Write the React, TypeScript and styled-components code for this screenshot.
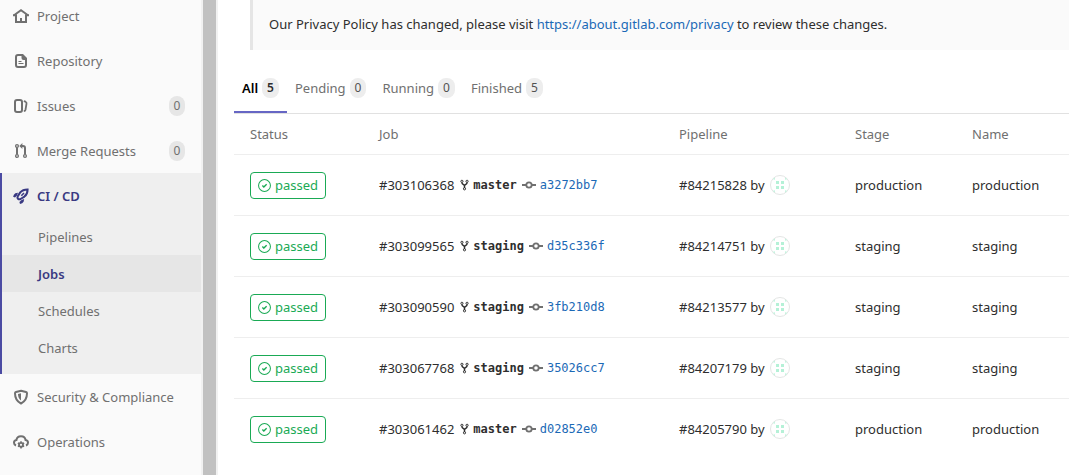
import React from "react";
import styled, { createGlobalStyle, css } from "styled-components";

const GlobalStyle = createGlobalStyle`
  *, *::before, *::after { box-sizing: border-box; }
  body {
    margin: 0;
    background: #fff;
    color: #2e2e2e;
    font: 13px/20px "Noto Sans", "Open Sans", sans-serif;
  }
  a { color: inherit; text-decoration: none; }
  ul { list-style: none; margin: 0; padding: 0; }
  svg { display: block; flex: none; }
`;

const Page = styled.div`
  display: flex;
  min-height: 100vh;
  overflow: hidden;
`;

const Sidebar = styled.nav`
  flex: none;
  width: 201px;
  margin-top: -7px;
  background: #fafafa;
  color: #707070;
`;

const Scrollbar = styled.div`
  flex: none;
  width: 17px;
  padding: 0 2px;
  background: #f1f1f1;
`;

const Thumb = styled.div`
  height: 100%;
  background: #c1c1c1;
`;

const NavItem = styled.li<{ $active?: boolean }>`
  ${(p) =>
    p.$active &&
    css`
      padding-bottom: 8px;
      background: #efefef;
      box-shadow: inset 2px 0 0 #4b4ba3;
    `}
`;

const NavLink = styled.a<{ $active?: boolean }>`
  display: flex;
  align-items: center;
  gap: 8px;
  height: 45px;
  padding: 0 16px 0 13px;
  ${(p) => p.$active && "color: #393982; font-weight: 600;"}
`;

const NavText = styled.span`
  flex: 1;
  white-space: nowrap;
`;

const SubItem = styled.li<{ $active?: boolean }>`
  margin-left: 2px;
  ${(p) => p.$active && "background: #e6e6e6; color: #393982; font-weight: 600;"}
`;

const SubLink = styled.a`
  display: flex;
  align-items: center;
  height: 37px;
  padding-left: 36px;
`;

const Count = styled.span<{ $dark?: boolean }>`
  min-width: 16px;
  padding: 0 ${(p) => (p.$dark ? 4 : 5)}px;
  border-radius: 8px;
  background: ${(p) => (p.$dark ? "#e6e6e6" : "#ededed")};
  color: ${(p) => (p.$dark ? "#707070" : "#525252")};
  font-size: 12px;
  text-align: center;
`;

const Main = styled.main`
  flex: 1;
  min-width: 0;
  padding-left: 16px;
`;

const Notice = styled.p`
  margin: 0 0 0 16px;
  padding: 14px 16px 16px;
  border-left: 3px solid #e5e5e5;
  background: #fafafa;
`;

const Link = styled.a`
  color: #1b69b6;
`;

const Tabs = styled.ul`
  display: flex;
  border-bottom: 1px solid #e1e1e1;
`;

const Tab = styled.a<{ $active?: boolean }>`
  display: flex;
  align-items: flex-start;
  gap: 4px;
  height: 63px;
  padding: 28px 8px 0;
  color: #707070;
  ${(p) =>
    p.$active &&
    css`
      color: #000;
      font-weight: 600;
      border-bottom: 2px solid #6666c4;
      ${Count} { color: #2e2e2e; }
    `}
`;

const Table = styled.table`
  width: 100%;
  table-layout: fixed;
  border-collapse: separate;
  border-spacing: 0;
`;

const Th = styled.th<{ $width?: number }>`
  width: ${(p) => (p.$width ? `${p.$width}px` : "auto")};
  height: 41px;
  padding: 0 16px;
  border-bottom: 1px solid #eee;
  color: #707070;
  font-weight: 400;
  text-align: left;
`;

const Td = styled.td`
  height: 61px;
  padding: 0 16px;
  border-bottom: 1px solid #eee;
  white-space: nowrap;

  tr:last-child > & { border-bottom-color: transparent; }
`;

const Inline = styled.div`
  display: flex;
  align-items: center;
`;

const Status = styled.a`
  display: inline-flex;
  align-items: center;
  gap: 4px;
  height: 27px;
  padding: 0 7px;
  border: 1px solid #1aaa55;
  border-radius: 4px;
  color: #1aaa55;
  vertical-align: middle;
`;

const Ref = styled.a<{ $sha?: boolean }>`
  font: ${(p) => (p.$sha ? 400 : 700)} 12px/20px "DejaVu Sans Mono", monospace;
  color: ${(p) => (p.$sha ? "#1b69b6" : "#2e2e2e")};
`;

const RefIcon = styled.span<{ $commit?: boolean }>`
  padding: ${(p) => (p.$commit ? "0 4px 0 5px" : "0 3px 0 5px")};
  color: ${(p) => (p.$commit ? "#707070" : "#2e2e2e")};
`;

const Avatar = styled.a`
  margin-left: 5px;
`;

const HomeIcon = () => (
  <svg width="16" height="16" viewBox="0 0 16 16" fill="none" stroke="currentColor" strokeWidth="2">
    <path d="M1 7.200 8 2.300l7 4.900" />
    <path d="M0 7.200h4M12 7.200h4M3 7v7h10V7" />
    <path d="M8 10v4" />
  </svg>
);

const DocIcon = () => (
  <svg width="16" height="16" viewBox="0 0 16 16" fill="none" stroke="currentColor">
    <path d="M9.5 2H5a2 2 0 0 0-2 2v8a2 2 0 0 0 2 2h6a2 2 0 0 0 2-2V6" strokeWidth="2" />
    <path d="M8.5 1H10l4 4v2h-3.5a2 2 0 0 1-2-2z" fill="currentColor" stroke="none" />
    <path d="M5.5 8.5h3M5.5 10.5h5" />
  </svg>
);

const IssuesIcon = () => (
  <svg width="16" height="16" viewBox="0 0 16 16" fill="none" stroke="currentColor" strokeWidth="2">
    <rect x="2" y="2" width="7" height="12" rx="2" />
    <path d="M10.8 3.2l1.7.5q1.3.6 1 2l-1 6q-.3 1.3-1.7 1.5" strokeWidth="1.8" />
  </svg>
);

const MergeIcon = () => (
  <svg width="16" height="16" viewBox="0 0 16 16" fill="none" stroke="currentColor">
    <circle cx="4" cy="3" r="1.4" strokeWidth="1.3" />
    <circle cx="4" cy="13" r="1.4" strokeWidth="1.3" />
    <circle cx="12" cy="13" r="1.4" strokeWidth="1.3" />
    <path d="M4 4.5v7M12 11.5V5a2 2 0 0 0-2-2H8.5" strokeWidth="2" />
    <path d="M9.4 0v6L6.3 3z" fill="currentColor" stroke="none" />
  </svg>
);

const RocketIcon = () => (
  <svg width="16" height="16" viewBox="0 0 16 16" fill="none" stroke="currentColor">
    <path d="M14.600 1.400c-3.200 0-5.600.8-7.400 3L4.800 8.200q-.8 1.600.2 2.600t2.600.2l3.800-2.400c2.200-1.800 3.200-4 3.200-7.200z" strokeWidth="2" />
    <path d="M11 5 8.300 7.700" strokeWidth="1.500" />
    <path d="M5 4.800 2.300 5.200Q.6 6.200.1 8.800L2 9.400 4 7.500zM11.200 11l-.6 2.700q-1 1.700-3.600 2.200L6.400 14l2.200-2z" fill="currentColor" stroke="none" />
  </svg>
);

const ShieldIcon = () => (
  <svg width="16" height="16" viewBox="0 0 16 16" fill="none" stroke="currentColor">
    <path d="M8 1.700 13 3q1 .3 1 1.200c0 4.800-1.500 8-6 10.300C3.500 12.200 2 9 2 4.200Q2 3.300 3 3z" strokeWidth="2" />
    <path d="M8 4.200v7.400C5.900 10 5 8 5 5z" fill="currentColor" stroke="none" />
  </svg>
);

const CloudGearIcon = () => (
  <svg width="16" height="16" viewBox="0 0 16 16" fill="none" stroke="currentColor">
    <path d="M3 11.500C1.700 11 1 10 1 8.800 1 7.300 2 6.300 3.400 6.100 3.700 3.800 5.500 2.200 8 2.200s4.300 1.600 4.600 3.900c1.400.2 2.400 1.200 2.400 2.700 0 1.200-.7 2.200-2 2.700" strokeWidth="2" />
    <circle cx="8" cy="10.800" r="2" strokeWidth="1.800" />
    <path d="M8 7.200v1.600M8 12.800v1.600M4.900 9l1.400.8M9.700 11.800l1.400.8M4.900 12.600l1.400-.8M9.700 9.800l1.400-.8" strokeWidth="1.600" />
  </svg>
);

const PassedIcon = () => (
  <svg width="13" height="13" viewBox="0 0 14 14" fill="none" stroke="currentColor">
    <circle cx="7" cy="7" r="6.400" strokeWidth="1.100" />
    <path d="M4.700 7.100 6.300 8.700 9.300 5.700" strokeWidth="1.500" />
  </svg>
);

const ForkIcon = () => (
  <svg width="11" height="12" viewBox="0 0 15 16" fill="none" stroke="currentColor">
    <circle cx="4" cy="3" r="1.500" strokeWidth="1.300" />
    <circle cx="11" cy="3" r="1.500" strokeWidth="1.300" />
    <circle cx="7.500" cy="13.200" r="1.500" strokeWidth="1.300" />
    <path d="M4 4.500C4 7.500 7.500 6.500 7.500 9.500v2.500M11 4.500C11 7.500 7.500 6.500 7.500 9.500" strokeWidth="2" />
  </svg>
);

const CommitIcon = () => (
  <svg width="14" height="14" viewBox="0 0 14 14" fill="none" stroke="currentColor" strokeWidth="2">
    <circle cx="7" cy="7" r="2.700" strokeWidth="1.800" />
    <path d="M0 7h4M10 7h4" />
  </svg>
);

const Identicon = () => (
  <svg width="20" height="20" viewBox="0 0 20 20">
    <circle cx="10" cy="10" r="9.500" fill="#fff" stroke="#e3e5e4" />
    <g fill="#b5f1d7">
      <path d="M6 6h3v3H6zM11 6h3v3h-3zM6 11h3v3H6zM11 11h3v3h-3z" />
      <path d="M3 4 5 2.500 4.500 5zM17 4l-2-1.500.5 2.500zM3 16l2 1.500-.5-2.500zM17 16l-2 1.500.5-2.500z" />
    </g>
  </svg>
);

const navigation = [
  { label: "Project", icon: <HomeIcon /> },
  { label: "Repository", icon: <DocIcon /> },
  { label: "Issues", icon: <IssuesIcon />, count: 0 },
  { label: "Merge Requests", icon: <MergeIcon />, count: 0 },
  { label: "CI / CD", icon: <RocketIcon />, children: ["Pipelines", "Jobs", "Schedules", "Charts"] },
  { label: "Security & Compliance", icon: <ShieldIcon /> },
  { label: "Operations", icon: <CloudGearIcon /> },
];

const tabs = [
  { label: "All", count: 5 },
  { label: "Pending", count: 0 },
  { label: "Running", count: 0 },
  { label: "Finished", count: 5 },
];

const jobs = [
  { id: "303106368", branch: "master", sha: "a3272bb7", pipeline: "84215828", stage: "production" },
  { id: "303099565", branch: "staging", sha: "d35c336f", pipeline: "84214751", stage: "staging" },
  { id: "303090590", branch: "staging", sha: "3fb210d8", pipeline: "84213577", stage: "staging" },
  { id: "303067768", branch: "staging", sha: "35026cc7", pipeline: "84207179", stage: "staging" },
  { id: "303061462", branch: "master", sha: "d02852e0", pipeline: "84205790", stage: "production" },
];

export default function App() {
  return (
    <>
      <GlobalStyle />
      <Page>
        <Sidebar aria-label="Project navigation">
          <ul>
            {navigation.map((item) => (
              <NavItem key={item.label} $active={!!item.children}>
                <NavLink href="#" $active={!!item.children}>
                  {item.icon}
                  <NavText>{item.label}</NavText>
                  {item.count !== undefined && <Count $dark>{item.count}</Count>}
                </NavLink>
                {item.children && (
                  <ul>
                    {item.children.map((child) => (
                      <SubItem key={child} $active={child === "Jobs"}>
                        <SubLink href="#">{child}</SubLink>
                      </SubItem>
                    ))}
                  </ul>
                )}
              </NavItem>
            ))}
          </ul>
        </Sidebar>
        <Scrollbar>
          <Thumb />
        </Scrollbar>
        <Main>
          <Notice>
            Our Privacy Policy has changed, please visit{" "}
            <Link href="#">https://about.gitlab.com/privacy</Link> to review these changes.
          </Notice>
          <Tabs>
            {tabs.map((tab, i) => (
              <li key={tab.label}>
                <Tab href="#" $active={i === 0}>
                  {tab.label}
                  <Count>{tab.count}</Count>
                </Tab>
              </li>
            ))}
          </Tabs>
          <Table>
            <thead>
              <tr>
                <Th $width={129}>Status</Th>
                <Th $width={300}>Job</Th>
                <Th $width={176}>Pipeline</Th>
                <Th $width={117}>Stage</Th>
                <Th>Name</Th>
              </tr>
            </thead>
            <tbody>
              {jobs.map((job) => (
                <tr key={job.id}>
                  <Td>
                    <Status href="#">
                      <PassedIcon />
                      passed
                    </Status>
                  </Td>
                  <Td>
                    <Inline>
                      <a href="#">#{job.id}</a>
                      <RefIcon>
                        <ForkIcon />
                      </RefIcon>
                      <Ref href="#">{job.branch}</Ref>
                      <RefIcon $commit>
                        <CommitIcon />
                      </RefIcon>
                      <Ref href="#" $sha>
                        {job.sha}
                      </Ref>
                    </Inline>
                  </Td>
                  <Td>
                    <Inline>
                      <span>
                        <a href="#">#{job.pipeline}</a> by
                      </span>
                      <Avatar href="#" aria-label="Pipeline author">
                        <Identicon />
                      </Avatar>
                    </Inline>
                  </Td>
                  <Td>{job.stage}</Td>
                  <Td>{job.stage}</Td>
                </tr>
              ))}
            </tbody>
          </Table>
        </Main>
      </Page>
    </>
  );
}
